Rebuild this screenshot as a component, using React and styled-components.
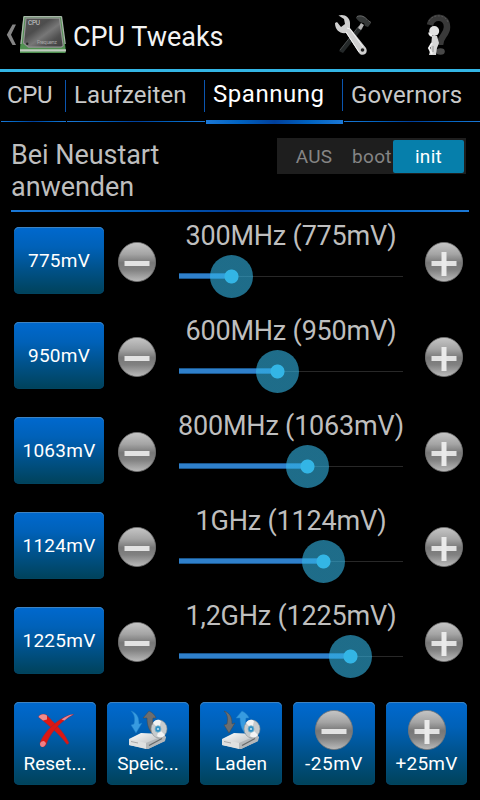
import React from 'react';
import styled, { createGlobalStyle } from 'styled-components';

const GlobalStyle = createGlobalStyle`
    * {
        box-sizing: border-box;
    }
    body {
        margin: 0;
        background: #000;
        font-family: Roboto, 'Liberation Sans', sans-serif;
    }
    button {
        font-family: inherit;
        border: 0;
        padding: 0;
        cursor: pointer;
    }
    svg {
        display: block;
        flex: none;
    }
`;

const Screen = styled.div`
    width: 480px;
    height: 800px;
    overflow: hidden;
    background: #000;
    display: flex;
    flex-direction: column;
`;

const Header = styled.header`
    display: flex;
    align-items: center;
    height: 72px;
    padding: 1px 27px 0 6px;
    border-bottom: 3px solid #33b5e5;
`;

const Title = styled.h1`
    flex: 1;
    margin: 4px 0 0 6px;
    color: #f3f3f3;
    font-size: 27px;
    font-weight: 400;
    white-space: nowrap;
`;

const HeaderAction = styled.button`
    background: transparent;
    margin-left: 52px;
`;

const Tabs = styled.nav`
    display: grid;
    grid-template-columns: 66px 139px 138px 137px;
    height: 52px;
`;

const Tab = styled.button`
    display: flex;
    flex-direction: column;
    justify-content: space-between;
    background: transparent;
    color: ${(p) => (p.$active ? '#fff' : '#c8c8c8')};
    font-size: 24px;
    letter-spacing: ${(p) => p.$spacing}px;
    white-space: nowrap;
`;

const TabLabel = styled.span`
    width: 100%;
    height: 32px;
    margin-top: ${(p) => (p.$active ? 7 : 8)}px;
    padding-left: ${(p) => p.$pad}px;
    border-right: ${(p) => (p.$last ? 0 : 1)}px solid #0b55b0;
    line-height: 30px;
    text-align: left;
`;

const TabLine = styled.span`
    width: 100%;
    height: ${(p) => (p.$active ? 4 : 1)}px;
    margin-bottom: ${(p) => (p.$active ? 0 : 2)}px;
    border-left: 1px solid #000;
    background: linear-gradient(90deg, #1b78d6, #0062c0 25%, #00409c 50%, #0062c0 75%, #1b78d6);
`;

const BootSection = styled.section`
    display: flex;
    justify-content: space-between;
    align-items: flex-start;
    height: 86px;
    padding: 14px 3px 0 0;
    margin: 0 11px;
`;

const BootText = styled.p`
    margin: 1px 0 0;
    width: 200px;
    color: #bebebe;
    font-size: 27px;
    line-height: 32px;
    letter-spacing: -0.05px;
`;

const Divider = styled.div`
    height: 2px;
    margin: 0 11px;
    background: linear-gradient(90deg, #1b78d6, #0062c0 25%, #00409c 50%, #0062c0 75%, #1b78d6);
`;

const Toggle = styled.div`
    display: grid;
    grid-template-columns: 74px 42px 71px;
    width: 189px;
    height: 36px;
    padding: 2px 2px 2px 0;
    background: #1e1e1e;
`;

const ToggleOption = styled.button`
    background: ${(p) => (p.$active ? '#067fab' : 'transparent')};
    color: ${(p) => (p.$active ? '#fff' : '#858585')};
    border-radius: 2px;
    font-size: 19px;
    letter-spacing: 0.3px;
    line-height: 32px;
    padding: 1px 0 0;
    white-space: nowrap;
`;

const Rows = styled.main`
    display: flex;
    flex-direction: column;
    padding-top: 8px;
    height: 490px;
`;

const Row = styled.div`
    display: grid;
    grid-template-columns: 104px 61px 246px 38px;
    justify-items: start;
    align-items: start;
    height: 95px;
    padding-left: 14px;
`;

const BlueButton = styled.button`
    color: #fff;
    font-size: 19px;
    border-radius: 5px;
    background: linear-gradient(#0069cf, #0061b8 30%, #00528b 62%, #00425a);
    box-shadow: inset 0 1px 0 #3d83c2, inset 0 0 1px #0b5c92;
`;

const VoltButton = styled(BlueButton)`
    width: 90px;
    height: 67px;
    margin-top: 7px;
    padding-bottom: 1px;
    letter-spacing: 0.25px;
`;

const StepButton = styled.button`
    background: transparent;
    height: 40px;
    margin-top: 22px;
`;

const SliderBox = styled.div`
    display: flex;
    flex-direction: column;
    align-items: center;
    width: 224px;
`;

const SliderTitle = styled.div`
    height: 35px;
    line-height: 32px;
    color: #bebebe;
    font-size: 27px;
    letter-spacing: -0.2px;
    white-space: nowrap;
`;

const Track = styled.div`
    position: relative;
    width: 224px;
    height: 43px;
    background: linear-gradient(#282828, #282828) 0 21px / 100% 1px no-repeat;
`;

const Progress = styled.div`
    height: 6px;
    margin-top: 18px;
    background: #2f80cb;
    border-top: 1px solid #1a568c;
    border-bottom: 1px solid #1a568c;
`;

// sits on top of the track, centred on the value
const Thumb = styled.div`
    position: absolute;
    top: 0;
    width: 43px;
    height: 43px;
    margin-left: -21px;
    border-radius: 50%;
    background: radial-gradient(circle, #33b5e5 6.6px, rgba(51, 181, 229, 0.6) 7.4px);
`;

const Footer = styled.footer`
    display: grid;
    grid-template-columns: 82px 82px 82px 82px 81px;
    column-gap: 11px;
    padding: 0 14px;
`;

const FooterButton = styled(BlueButton)`
    display: flex;
    flex-direction: column;
    align-items: center;
    height: 83px;
    padding-top: 8px;
    letter-spacing: ${(p) => p.$spacing || 0}px;
`;

const FooterLabel = styled.span`
    line-height: 22px;
    margin-top: 3px;
    white-space: nowrap;
`;

const RoundIcon = ({ plus, id }) => (
    <svg width="38" height="40" viewBox="0 0 38 40">
        <defs>
            <linearGradient id={id} x1="0" y1="0" x2="0" y2="1">
                <stop offset="0" stopColor="#c6c6c6" />
                <stop offset="0.3" stopColor="#a4a4a4" />
                <stop offset="0.52" stopColor="#777" />
                <stop offset="0.7" stopColor="#818181" />
                <stop offset="1" stopColor="#bcbcbc" />
            </linearGradient>
        </defs>
        <ellipse cx="19" cy="20" rx="18.6" ry="19.6" fill={`url(#${id})`} stroke="#777" strokeWidth="0.8" />
        <path d="M6.5 19h25v5h-25z" fill="#e2e2e2" />
        {plus && <path d="M16.5 10h5v24h-5z" fill="#eaeaea" />}
    </svg>
);

const BackIcon = () => (
    <svg width="11" height="22" viewBox="0 0 11 22">
        <path d="M6.5 0.5h3.5L5 10.8 10 21H6.5L0.8 10.8z" fill="#858585" />
    </svg>
);

const ChipIcon = () => (
    <svg width="48" height="38" viewBox="0 0 48 38" style={{ marginLeft: 2 }}>
        <defs>
            <linearGradient id="chip" x1="0" y1="0" x2="1" y2="1">
                <stop offset="0" stopColor="#555" />
                <stop offset="0.35" stopColor="#4d4d4d" />
                <stop offset="0.55" stopColor="#777" />
                <stop offset="0.75" stopColor="#505050" />
                <stop offset="1" stopColor="#3c3c3c" />
            </linearGradient>
        </defs>
        <path d="M4.5 0h38l4 32v5H1v-5z" fill="#4f9150" />
        <path d="M1 33.2h46v2.2H1z" fill="#bfcabf" />
        <path d="M5 0.6h37.5M5 0.6L2 28M42.5 0.6L46.2 28" stroke="#a9b4a9" strokeWidth="1.3" fill="none" />
        <path d="M7 2.2h33.5l3.7 27.5-2 1.5H9.5L4.5 27z" fill="url(#chip)" stroke="#929292" strokeWidth="1.2" />
        <circle cx="8.2" cy="27.8" r="1.2" fill="#252525" />
        <text x="9" y="9.3" fontSize="6.5" fill="#ccc" textLength="12">CPU</text>
        <text x="18" y="28" fontSize="5.5" fill="#a6a6a6" textLength="20">Frequenz</text>
    </svg>
);

const ToolsIcon = () => (
    <svg width="38" height="42" viewBox="0 0 38 42">
        <path d="M4 37L25 11l3 3L8 39z" fill="#242829" />
        <path d="M5 36l19-24" stroke="#4b4f50" strokeWidth="1" />
        <path d="M23 14l3-5 3 2-3 5z" fill="#b2b2b2" />
        <path d="M21 3c5-3 9-1 12 4l3 2-3 4-3-1-1-3c-3 0-6-2-8-5z" fill="#343737" />
        <path d="M22 2.5c4-1.5 8 0 11 4l3 2" stroke="#777" strokeWidth="0.8" fill="none" />
        <path
            d="M3.500 1.500C9-.5 15 3 15 9l0 5 16 20c3 6-4 9-7 5L11 19C5 20 0 16 0 9l2-1 4 5 4-3-1-5z"
            fill="#cfcfcf"
        />
        <path d="M12 14l3 1 13 18M11 18l13 20" stroke="#f5f5f5" strokeWidth="1" fill="none" />
        <circle cx="27.500" cy="36" r="1.8" fill="#222" />
    </svg>
);

const HelpIcon = () => (
    <svg width="28" height="44" viewBox="0 0 28 44">
        <path
            d="M5 12C7 2 22 2 22 14c0 8-7 9-7 18"
            fill="none"
            stroke="#393939"
            strokeWidth="6.500"
        />
        <path d="M4 8C8 1 20 1 23 9" fill="none" stroke="#555" strokeWidth="1" strokeDasharray="2 1.5" />
        <ellipse cx="15.5" cy="38.5" rx="4.3" ry="3.3" fill="#484848" />
        <circle cx="9.2" cy="18" r="5" fill="#e2e2e2" />
        <path d="M7 23l5 0 2 7-2 5-1 7-7 0 2-8z" fill="#d7d7d7" />
        <path d="M7 23c-2-1-3-2-2.5-3.5M7 30l-3 5 3 6" stroke="#f3f3f3" strokeWidth="2" fill="none" />
        <path d="M8 33l0 6" stroke="#888" strokeWidth="0.8" />
    </svg>
);

const CrossIcon = () => (
    <svg width="40" height="40" viewBox="0 0 40 40">
        <path
            d="M3.500 7C5 4 9 3.500 12 5.500 19 13 28 20 34 33l-2 1.500C26 26 16 17 3.500 7z"
            fill="#dc1712"
            stroke="#8f2940"
            strokeWidth="0.5"
        />
        <path
            d="M38.500 4.500C28 5 10 19 5 33c0 4 4 5 6 2C14 25 24 12 38.500 4.500z"
            fill="#dc1712"
            stroke="#8f2940"
            strokeWidth="0.5"
        />
        <path d="M3.500 7C5 4 9 3.500 12 5.500l0 4-4 1z" fill="#f08c8c" />
        <path d="M5 34c0-2 2-3 4-3l2 2c-1 5-6 5-6 1z" fill="#ef8087" />
        <path d="M38.500 4.500c-4 0-8 2-12 5l3 1c3-3 6-5 9-6z" fill="#e58a98" />
    </svg>
);

const DriveIcon = ({ load }) => {
    const id = load ? 'driveLoad' : 'driveSave';
    const blue = { fill: '#379be0', stroke: '#1d7dc6', strokeWidth: 0.5 };
    const gray = { fill: '#6c6e70', stroke: '#45494d', strokeWidth: 0.5 };
    return (
        <svg width="42" height="40" viewBox="0 0 42 40">
            <defs>
                <linearGradient id={id} x1="0" y1="0" x2="1" y2="1">
                    <stop offset="0" stopColor="#fff" />
                    <stop offset="1" stopColor="#a4a8aa" />
                </linearGradient>
            </defs>
            <path d="M2 29l12-6 22 1 3 3-1 4-17 8L2 35z" fill={`url(#${id})`} />
            <path d="M2 29l17 4v6L2 35z" fill="#dfe0e0" />
            <path d="M19 33l19-8v6l-17 8h-2z" fill="#b4b7b9" />
            <path d="M22 35.500l13-7" stroke="#66696b" strokeWidth="1.3" />
            <path d="M4 31.500l7 1.500" stroke="#999" strokeWidth="0.8" />
            <path d="M22 1l-6 7 4 0c0 7 2 13 7 17l4-3c-4-3-6-8-5-14h3c-1-3-3-5-7-7z" {...(load ? blue : gray)} />
            <ellipse cx="32" cy="19" rx="8" ry="9" fill="#c7cbcd" stroke="#898e90" strokeWidth="0.6" />
            <path d="M32 19l-6-6c2-4 6-4 8-2zM32 19l6 6c-2 3-6 3-8 1z" fill="#f3f3f3" />
            <ellipse cx="31" cy="19" rx="3" ry="3.300" fill="#2c91c8" stroke="#7fb0c7" strokeWidth="0.8" />
            <circle cx="31" cy="19" r="1.100" fill="#bfe2f3" />
            <path d="M4 1c6 2 8 6 8 13l3-1-6 10-5-8 3-1C8 9 8 5 4 1z" {...(load ? gray : blue)} />
        </svg>
    );
};

const tabs = [
    { label: 'CPU', pad: 7, spacing: -0.4 },
    { label: 'Laufzeiten', pad: 8, spacing: 0.1 },
    { label: 'Spannung', pad: 8, spacing: 0.55, active: true },
    { label: 'Governors', pad: 8, spacing: 0.2, last: true },
];

// x is the slider position in px on the 224px track
const steps = [
    { freq: '300MHz', volt: '775mV', x: 52 },
    { freq: '600MHz', volt: '950mV', x: 98 },
    { freq: '800MHz', volt: '1063mV', x: 128 },
    { freq: '1GHz', volt: '1124mV', x: 144 },
    { freq: '1,2GHz', volt: '1225mV', x: 171 },
];

const App = () => (
    <>
        <GlobalStyle />
        <Screen>
            <Header>
                <BackIcon />
                <ChipIcon />
                <Title>CPU Tweaks</Title>
                <HeaderAction aria-label="Tools">
                    <ToolsIcon />
                </HeaderAction>
                <HeaderAction aria-label="Help">
                    <HelpIcon />
                </HeaderAction>
            </Header>
            <Tabs>
                {tabs.map((t) => (
                    <Tab key={t.label} $active={t.active} $spacing={t.spacing}>
                        <TabLabel $active={t.active} $pad={t.pad} $last={t.last}>
                            {t.label}
                        </TabLabel>
                        <TabLine $active={t.active} />
                    </Tab>
                ))}
            </Tabs>
            <BootSection>
                <BootText>Bei Neustart anwenden</BootText>
                <Toggle>
                    <ToggleOption>AUS</ToggleOption>
                    <ToggleOption>boot</ToggleOption>
                    <ToggleOption $active>init</ToggleOption>
                </Toggle>
            </BootSection>
            <Divider />
            <Rows>
                {steps.map((s, i) => (
                    <Row key={s.freq}>
                        <VoltButton>{s.volt}</VoltButton>
                        <StepButton aria-label="minus">
                            <RoundIcon id={`minus${i}`} />
                        </StepButton>
                        <SliderBox>
                            <SliderTitle>
                                {s.freq} ({s.volt})
                            </SliderTitle>
                            <Track>
                                <Progress style={{ width: s.x }} />
                                <Thumb style={{ left: s.x }} />
                            </Track>
                        </SliderBox>
                        <StepButton aria-label="plus">
                            <RoundIcon id={`plus${i}`} plus />
                        </StepButton>
                    </Row>
                ))}
            </Rows>
            <Footer>
                <FooterButton>
                    <CrossIcon />
                    <FooterLabel>Reset...</FooterLabel>
                </FooterButton>
                <FooterButton>
                    <DriveIcon />
                    <FooterLabel>Speic...</FooterLabel>
                </FooterButton>
                <FooterButton>
                    <DriveIcon load />
                    <FooterLabel>Laden</FooterLabel>
                </FooterButton>
                <FooterButton $spacing={0.5}>
                    <RoundIcon id="minusAll" />
                    <FooterLabel>-25mV</FooterLabel>
                </FooterButton>
                <FooterButton $spacing={0.2}>
                    <RoundIcon id="plusAll" plus />
                    <FooterLabel>+25mV</FooterLabel>
                </FooterButton>
            </Footer>
        </Screen>
    </>
);

export default App;
